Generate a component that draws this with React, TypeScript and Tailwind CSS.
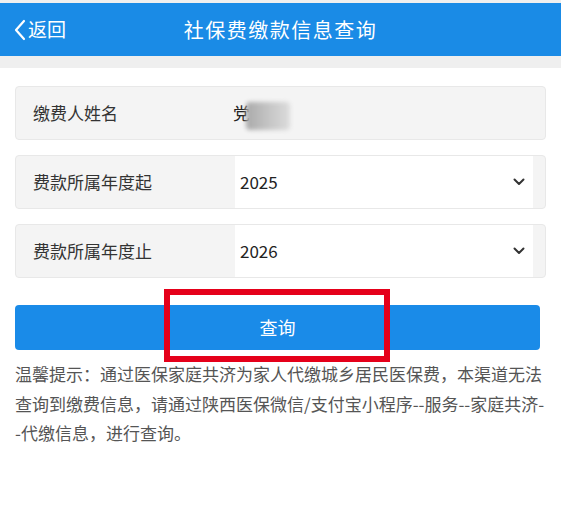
import React from 'react';

const font = { fontFamily: '"Noto Sans CJK SC", "Noto Sans", sans-serif' };

const Chevron = () => (
  <svg width="12" height="8" viewBox="0 0 12 8" fill="none">
    <path d="M1.5 1.5 L6 6 L10.5 1.5" stroke="#333" strokeWidth="2" strokeLinecap="round" strokeLinejoin="round" />
  </svg>
);

const SelectRow = ({ label, value }: { label: string; value: string }) => (
  <div className="h-[54px] flex items-stretch bg-[#f4f4f4] border border-[#e8e8e8] rounded-[4px] overflow-hidden">
    <div className="w-[219px] pl-[17px] flex items-center text-[17px] text-[#333]">{label}</div>
    <div className="w-[298px] bg-white flex items-center justify-between pl-[5px] pr-[8px] text-[17px] text-[#222]">
      <span>{value}</span>
      <Chevron />
    </div>
  </div>
);

export default function App() {
  return (
    <div className="relative w-[561px] h-[507px] bg-white overflow-hidden" style={font}>
      {/* Header */}
      <div className="pt-[3px] bg-[#efefef]">
        <div className="h-[53px] bg-[#1a8be6] flex items-center relative">
          <div className="absolute left-[14px] top-0 h-full flex items-center text-white text-[19px]">
            <svg width="12" height="22" viewBox="0 0 12 22" fill="none" className="mr-[2px]">
              <path d="M10 2 L2 11 L10 20" stroke="white" strokeWidth="2.2" strokeLinecap="round" strokeLinejoin="round" />
            </svg>
            返回
          </div>
          <div className="w-full text-center text-white text-[20px] tracking-[1.5px]">社保费缴款信息查询</div>
        </div>
        <div className="h-[12px] bg-[#efefef]" />
      </div>

      {/* Form */}
      <div className="px-[15px] pt-[18px] flex flex-col gap-[15px] bg-white">
        <div className="h-[54px] flex items-center bg-[#f4f4f4] border border-[#e8e8e8] rounded-[4px]">
          <div className="w-[217px] pl-[17px] text-[17px] text-[#333]">缴费人姓名</div>
          <div className="flex items-center text-[17px] text-[#222]">
            <span>党</span>
            <div className="ml-[-4px] mt-[6px] w-[44px] h-[28px] rounded-[4px] bg-gradient-to-r from-[#aaaaaa] via-[#c4c4c4] to-[#dcdcdc] blur-[2px]" />
          </div>
        </div>
        <SelectRow label="费款所属年度起" value="2025" />
        <SelectRow label="费款所属年度止" value="2026" />
      </div>

      <div className="px-[15px] pt-[27px] pr-[21px]">
        <button className="w-full h-[45px] bg-[#1a8be8] rounded-[4px] text-white text-[18px]">查询</button>
      </div>

      <p className="px-[15px] mt-[9px] text-[17px] leading-[29.5px] text-[#555]">
        温馨提示：通过医保家庭共济为家人代缴城乡居民医保费，本渠道无法查询到缴费信息，请通过陕西医保微信/支付宝小程序--服务--家庭共济--代缴信息，进行查询。
      </p>

      {/* annotation */}
      <div className="absolute left-[164px] top-[289px] w-[226px] h-[73px] border-[6px] border-[#e5001a]" />
    </div>
  );
}
